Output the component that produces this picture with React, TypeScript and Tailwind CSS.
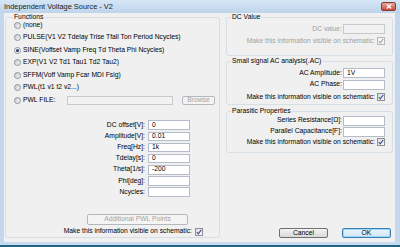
import React from "react";

const Radio = ({ checked = false }: { checked?: boolean }) => (
  <span
    className={
      "w-[7px] h-[7px] rounded-full border border-[#8e9398] flex items-center justify-center shrink-0 " +
      (checked ? "bg-[#f6f6f6]" : "bg-gradient-to-br from-[#c9ccd0] to-[#f4f4f4]")
    }
  >
    {checked && <span className="w-[3px] h-[3px] rounded-full bg-[#1b3a72]" />}
  </span>
);

const Check = ({ disabled = false }: { disabled?: boolean }) => (
  <span
    className={
      "w-[8px] h-[8px] border flex items-center justify-center shrink-0 " +
      (disabled ? "border-[#b8b8b8] bg-[#f4f4f4]" : "border-[#8e8f8f] bg-gradient-to-br from-[#dcdcdc] to-[#fbfbfb]")
    }
  >
    <svg width="6" height="6" viewBox="0 0 6 6">
      <path
        d="M0.8 3.1 L2.3 4.8 L5.3 0.9"
        stroke={disabled ? "#a8a8a8" : "#3a4fa3"}
        strokeWidth="1.1"
        fill="none"
      />
    </svg>
  </span>
);

const Field = ({
  value = "",
  className = "",
  disabled = false,
}: {
  value?: string;
  className?: string;
  disabled?: boolean;
}) => (
  <div
    className={
      "border flex items-center pl-[3px] shrink-0 leading-none " +
      (disabled ? "bg-[#f2f2f2] border-[#c4c9ce] " : "bg-white border-[#b3bcc8] ") +
      className
    }
  >
    {value}
  </div>
);

const Btn = ({
  children,
  className = "",
  disabled = false,
  primary = false,
}: {
  children: React.ReactNode;
  className?: string;
  disabled?: boolean;
  primary?: boolean;
}) => (
  <div
    className={
      "rounded-[2px] border flex items-center justify-center shrink-0 leading-none " +
      (disabled
        ? "border-[#b5b9bd] bg-[#f4f4f4] text-[#a3a3a3] "
        : primary
        ? "border-[#3c7fb1] bg-gradient-to-b from-[#eaf6fd] to-[#cfe6f5] text-black shadow-[inset_0_0_0_1px_#9fd5f5] "
        : "border-[#707070] bg-gradient-to-b from-[#f4f4f4] to-[#d8d8d8] text-black ") +
      className
    }
  >
    {children}
  </div>
);

const radios = [
  { label: "(none)" },
  { label: "PULSE(V1 V2 Tdelay Trise Tfall Ton Period Ncycles)" },
  { label: "SINE(Voffset Vamp Freq Td Theta Phi Ncycles)", checked: true },
  { label: "EXP(V1 V2 Td1 Tau1 Td2 Tau2)" },
  { label: "SFFM(Voff Vamp Fcar MDI Fsig)" },
  { label: "PWL(t1 v1 t2 v2...)" },
];

const params = [
  { label: "DC offset[V]:", value: "0" },
  { label: "Amplitude[V]:", value: "0.01" },
  { label: "Freq[Hz]:", value: "1k" },
  { label: "Tdelay[s]:", value: "0" },
  { label: "Theta[1/s]:", value: "-200" },
  { label: "Phi[deg]:", value: "" },
  { label: "Ncycles:", value: "" },
];

export default function App() {
  return (
    <div className="w-[400px] h-[247px] flex flex-col bg-[#c3d8ed] font-['Liberation_Sans',Arial,sans-serif] text-[6.75px] text-black overflow-hidden">
      {/* Title bar */}
      <div className="h-[13px] flex items-center pl-[4px] pr-[4px] bg-gradient-to-b from-[#d6e6f6] to-[#bed4ea] shrink-0">
        <span className="text-[7.4px] text-[#1b1b1b] leading-none">Independent Voltage Source - V2</span>
        <div className="ml-auto w-[15px] h-[9px] rounded-[2px] border border-[#8a3b32] bg-gradient-to-b from-[#e9a79b] to-[#c5493b] flex items-center justify-center">
          <svg width="6" height="5" viewBox="0 0 6 5">
            <path d="M0.8 0.6 L5.2 4.4 M5.2 0.6 L0.8 4.4" stroke="#ffffff" strokeWidth="1.3" />
          </svg>
        </div>
      </div>

      {/* Client */}
      <div className="h-[229px] flex ml-[4px] mr-[5px] bg-[#f0f0f0] shrink-0">
        {/* Functions group */}
        <fieldset className="w-[215px] h-[225px] border border-[#d5dfe5] rounded-[3px] p-0 m-0 ml-[1px] shrink-0 min-w-0">
          <legend className="ml-[7px] px-[1px] leading-[8px]">Functions</legend>
          <div className="-mt-[2px] flex flex-col">
            {radios.map((r) => (
              <div key={r.label} className="h-[12.5px] flex items-center pl-[8px]">
                <Radio checked={!!r.checked} />
                <span className="ml-[2px] leading-none whitespace-nowrap">{r.label}</span>
              </div>
            ))}
            <div className="h-[12.5px] flex items-center pl-[8px]">
              <Radio />
              <span className="ml-[2px] w-[44px] leading-none whitespace-nowrap">PWL FILE:</span>
              <Field disabled className="w-[106px] h-[9px]" />
              <Btn disabled className="ml-[9px] w-[33px] h-[9px]">
                Browse
              </Btn>
            </div>
          </div>
          <div className="mt-[13px] flex flex-col">
            {params.map((p) => (
              <div key={p.label} className="h-[11.2px] flex items-center">
                <span className="w-[139px] text-right leading-none whitespace-nowrap">{p.label}</span>
                <Field value={p.value} className="ml-[3px] w-[42px] h-[9.5px]" />
              </div>
            ))}
          </div>
          <Btn disabled className="mt-[16px] ml-[81px] w-[101px] h-[11px]">
            Additional PWL Points
          </Btn>
          <div className="mt-[3px] h-[8px] flex items-center justify-end pr-[16px]">
            <span className="mr-[3px] leading-none whitespace-nowrap">Make this information visible on schematic:</span>
            <Check />
          </div>
        </fieldset>

        {/* Right column */}
        <div className="ml-[6px] w-[167px] flex flex-col pb-[4px] shrink-0">
          <fieldset className="w-[167px] h-[43px] border border-[#d5dfe5] rounded-[3px] p-0 m-0 shrink-0 min-w-0">
            <legend className="ml-[4px] px-[1px] leading-[8px]">DC Value</legend>
            <div className="mt-[3px] h-[10px] flex items-center justify-end pr-[7px]">
              <span className="mr-[1px] text-[#a0a0a0] leading-none">DC value:</span>
              <Field disabled className="w-[42px] h-[10px]" />
            </div>
            <div className="mt-[3px] h-[8px] flex items-center justify-end pr-[7px]">
              <span className="mr-[2px] text-[#a0a0a0] leading-none whitespace-nowrap">
                Make this information visible on schematic:
              </span>
              <Check disabled />
            </div>
          </fieldset>

          <fieldset className="mt-[1px] w-[167px] h-[48px] border border-[#d5dfe5] rounded-[3px] p-0 m-0 shrink-0 min-w-0">
            <legend className="ml-[4px] px-[1px] leading-[8px]">Small signal AC analysis(.AC)</legend>
            <div className="mt-[3px] h-[10px] flex items-center justify-end pr-[7px]">
              <span className="mr-[1px] leading-none">AC Amplitude:</span>
              <Field value="1V" className="w-[42px] h-[10px]" />
            </div>
            <div className="mt-[1.5px] h-[10px] flex items-center justify-end pr-[7px]">
              <span className="mr-[1px] leading-none">AC Phase:</span>
              <Field className="w-[42px] h-[10px]" />
            </div>
            <div className="mt-[3.5px] h-[8px] flex items-center justify-end pr-[7px]">
              <span className="mr-[2px] leading-none whitespace-nowrap">
                Make this information visible on schematic:
              </span>
              <Check />
            </div>
          </fieldset>

          <fieldset className="mt-[2px] w-[167px] h-[46px] border border-[#d5dfe5] rounded-[3px] p-0 m-0 shrink-0 min-w-0">
            <legend className="ml-[4px] px-[1px] leading-[8px]">Parasitic Properties</legend>
            <div className="mt-[1px] h-[9.5px] flex items-center justify-end pr-[7px]">
              <span className="mr-[1px] leading-none">Series Resistance[Ω]:</span>
              <Field className="w-[42px] h-[9.5px]" />
            </div>
            <div className="mt-[1.5px] h-[9.5px] flex items-center justify-end pr-[7px]">
              <span className="mr-[1px] leading-none">Parallel Capacitance[F]:</span>
              <Field className="w-[42px] h-[9.5px]" />
            </div>
            <div className="mt-[1.5px] h-[8px] flex items-center justify-end pr-[7px]">
              <span className="mr-[2px] leading-none whitespace-nowrap">
                Make this information visible on schematic:
              </span>
              <Check />
            </div>
          </fieldset>

          <div className="mt-auto flex justify-end gap-[14px] pr-[2px]">
            <Btn className="w-[49px] h-[10px]">Cancel</Btn>
            <Btn primary className="w-[49px] h-[10px]">
              OK
            </Btn>
          </div>
        </div>
      </div>

      {/* Bottom frame */}
      <div className="h-[3px] bg-[#c6dbef] shrink-0" />
      <div className="h-[2px] bg-[#1d6482] shrink-0" />
    </div>
  );
}
